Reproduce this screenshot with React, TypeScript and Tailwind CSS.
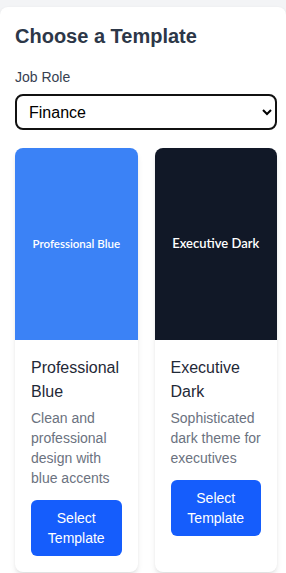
import { useState } from "react";

const templates = [
  {
    id: "blue",
    name: "Professional Blue",
    desc: "Clean and professional design with blue accents",
    bg: "bg-[#3b82f6]",
    label: "text-[11.5px]",
  },
  {
    id: "dark",
    name: "Executive Dark",
    desc: "Sophisticated dark theme for executives",
    bg: "bg-[#111827]",
    label: "text-[13px]",
  },
];

export default function App() {
  const [role, setRole] = useState("Finance");

  return (
    <div className="min-h-screen bg-[#f3f4f6] pt-[7px] font-['Liberation_Sans',Arial,sans-serif]">
      <div className="rounded-lg bg-white pl-[15px] pr-[9px] pt-[15px] pb-4 shadow-sm">
        <h2 className="text-xl font-bold leading-7 text-[#2d3748]">Choose a Template</h2>

        <label className="mt-[17px] block text-sm leading-5 text-[#374151]">Job Role</label>
        <select
          value={role}
          onChange={(e) => setRole(e.target.value)}
          className="mt-[7px] block h-9 w-full rounded-lg border-2 border-[#111] bg-white px-2 text-base text-black"
        >
          <option>Finance</option>
          <option>Engineering</option>
          <option>Marketing</option>
        </select>

        <div className="mt-[18px] grid grid-cols-2 gap-[17px]">
          {templates.map((t) => (
            <div key={t.id} className="flex flex-col overflow-hidden rounded-lg bg-white shadow-md">
              <div className={`flex h-[192px] items-center justify-center ${t.bg}`}>
                <span className={`font-['Lato',sans-serif] font-semibold text-white ${t.label}`}>{t.name}</span>
              </div>
              <div className="flex flex-col items-start p-4">
                <h3 className="text-base leading-6 text-[#1f2937]">{t.name}</h3>
                <p className="mt-1 text-sm leading-5 text-[#6b7280]">{t.desc}</p>
                <button className="mt-3 rounded-md bg-[#155dfc] px-4 py-2 text-sm leading-5 text-white">
                  Select Template
                </button>
              </div>
            </div>
          ))}
        </div>
      </div>
    </div>
  );
}
